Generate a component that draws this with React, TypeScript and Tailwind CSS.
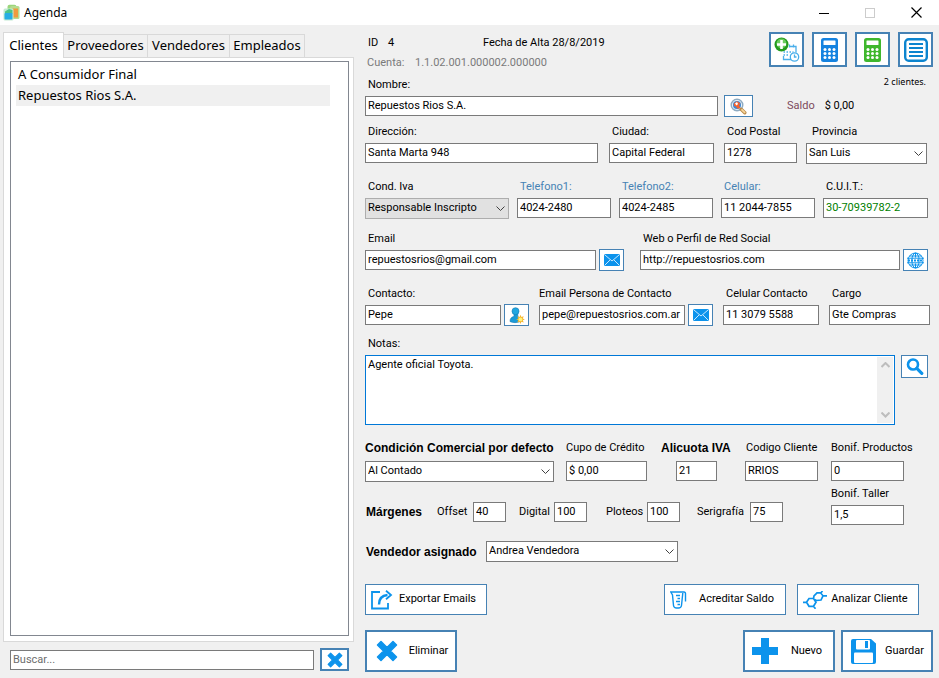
import type { ReactNode } from 'react';
import clsx from 'clsx';

const BLUE = '#0c93ec';

const tabs = [
  { label: 'Clientes', width: 'w-[61px]' },
  { label: 'Proveedores', width: 'w-[84px]' },
  { label: 'Vendedores', width: 'w-[82px]' },
  { label: 'Empleados', width: 'w-[75px]' },
];

const clients = ['A Consumidor Final', 'Repuestos Rios S.A.'];

const margins = [
  { id: 'offset', label: 'Offset', value: '40', width: 'w-[69px]' },
  { id: 'digital', label: 'Digital', value: '100', width: 'w-[68px]' },
  { id: 'ploteos', label: 'Ploteos', value: '100', width: 'w-[74px] ml-[6px]' },
  { id: 'serigrafia', label: 'Serigrafía', value: '75', width: 'w-[86px] ml-1' },
];

/* ---------- icons ---------- */

function AppIcon() {
  return (
    <svg width="17" height="17" viewBox="0 0 17 17">
      <rect x="4.5" y=".8" width="9" height="12" rx="2" fill="#9bd67c" />
      <rect x="7" y="2" width="9.500" height="13" rx="1.500" fill="#b5dc8f" />
      <rect x="9.500" y="4.500" width="5.500" height="9" fill="#f09a3e" />
      <rect x=".5" y="4.500" width="10" height="12" rx="1.500" fill="#c4ead2" />
      <path d="M2 7.500L6 5l3.500 1v4H2z" fill="#4cc487" />
      <rect x="1.500" y="9" width="8" height="6.500" rx="1" fill="#27aee4" />
    </svg>
  );
}

function MailIcon() {
  return (
    <svg width="16" height="12" viewBox="0 0 16 12" fill="none">
      <rect width="16" height="12" rx="1.500" fill={BLUE} />
      <path d="M1 1l7 6 7-6M1 11l5-5M15 11l-5-5" stroke="#c8e8ff" strokeWidth="1" />
    </svg>
  );
}

function GlobeIcon() {
  return (
    <svg width="17" height="17" viewBox="0 0 17 17" fill="none" stroke={BLUE}>
      <circle cx="8.5" cy="8.5" r="7.5" />
      <ellipse cx="8.5" cy="8.5" rx="3.6" ry="7.5" />
      <path d="M8.5 1v4.500M8.500 11.500V16M2.5 4h12M2.5 13h12" />
      <path d="M0 6.200h17M0 10.800h17" />
      <path d="M1 8.500h15" strokeWidth="2" strokeDasharray="2 1" />
    </svg>
  );
}

function SearchIcon() {
  return (
    <svg width="18" height="17" viewBox="0 0 18 17" fill="none" stroke={BLUE}>
      <circle cx="7" cy="6.5" r="5" strokeWidth="2.6" />
      <path d="M10.8 10.3l5 5" strokeWidth="3.2" strokeLinecap="round" />
    </svg>
  );
}

function LookupIcon() {
  return (
    <svg width="17" height="17" viewBox="0 0 17 17" fill="none">
      <circle cx="7" cy="7" r="5.8" fill="#e6f2fb" stroke="#8eabc2" strokeWidth="1.4" />
      <circle cx="7" cy="7" r="4" fill="#3e86d2" />
      <path d="M3.800 5.500L7 3.300l3.400 2-1.400 2.200L10.500 10l-3 .8L6 8.500 4 8z" fill="#f4622e" />
      <path d="M5 5.500l2-1.500 1 2-1.500 1.500z" fill="#ffffff" />
      <path d="M11.2 11.2l3.6 3.6" stroke="#b98a4a" strokeWidth="3.400" strokeLinecap="round" />
      <path d="M12 11.800l2.600 2.600" stroke="#f7d59b" strokeWidth="1.800" strokeLinecap="round" />
    </svg>
  );
}

function PersonIcon() {
  return (
    <svg width="17" height="17" viewBox="0 0 17 17">
      <path
        d="M2 14.500c0-3 1.500-4.500 3.800-5L6.500 6h3l.5 4c1.500.5 2.500 2.500 2 4.500-2.500 1.500-7.500 1.500-10 0z"
        fill="#1b9bd8"
        stroke="#0f78b4"
        strokeWidth=".6"
      />
      <circle cx="7.500" cy="4.200" r="3.500" fill="#22a7e0" stroke="#0f78b4" strokeWidth=".6" />
      <path
        d="M12.500 7.800l.9 2.300 2.300-.9-.9 2.300 2 .9-2 .9.9 2.300-2.300-.9-.9 2.200-.9-2.200-2.300.9.9-2.300-2-.9 2-.9-.9-2.300 2.300.9z"
        fill="#f6b530"
      />
      <circle cx="12.500" cy="12.400" r="1.900" fill="#fff27a" />
    </svg>
  );
}

function ScheduleIcon() {
  return (
    <svg width="26" height="26" viewBox="0 0 26 26" fill="none">
      <g stroke="#4aaeea" strokeWidth="1.300">
        <path d="M9.500 19v3.500h8M15 9.500h7v6M15.500 7.500v3M19.500 7.500v3" />
        <path d="M9.500 15h10M9.500 18h6" strokeDasharray="1.500 1.500" strokeWidth="1.600" />
        <circle cx="20.500" cy="20" r="4.200" fill="#ffffff" />
        <path d="M20.500 17.500V20h2" />
      </g>
      <circle cx="7.500" cy="7.500" r="7" fill="#239a1c" />
      <circle cx="7.500" cy="6.500" r="5" fill="#6acb5c" />
      <path d="M7.500 3v9M3 7.500h9" stroke="#ffffff" strokeWidth="2.600" />
    </svg>
  );
}

function CalculatorIcon({ color }: { color: string }) {
  return (
    <svg width="17" height="24" viewBox="0 0 17 24">
      <rect width="17" height="24" rx="2.500" fill={color} />
      <rect x="2.500" y="2.500" width="12" height="4.500" rx=".5" fill="#ffffff" />
      {[11.5, 15.5, 19.5].map((y) =>
        [4, 8.5, 13].map((x) => <circle key={`${x}-${y}`} cx={x} cy={y} r="1.500" fill="#ffffff" />),
      )}
    </svg>
  );
}

function ListIcon() {
  return (
    <svg width="24" height="24" viewBox="0 0 24 24" fill="none" stroke="#0c85cf">
      <rect x="1.200" y="1.200" width="21.600" height="21.600" rx="3.500" strokeWidth="2.400" />
      <path d="M5 6h14M5 10h14M5 14h14M5 18h14" strokeWidth="2" />
    </svg>
  );
}

function CrossIcon({ size }: { size: number }) {
  return (
    <svg width={size} height={size} viewBox="0 0 22 22" fill={BLUE} stroke={BLUE} strokeLinejoin="round">
      <path d="M5 1.500L11 7.500l6-6L20.500 5l-6 6 6 6-3.500 3.500-6-6-6 6L1.500 17l6-6-6-6z" strokeWidth="1.500" />
    </svg>
  );
}

function PlusIcon() {
  return (
    <svg width="26" height="26" viewBox="0 0 26 26" fill={BLUE}>
      <path d="M9 0h8v9h9v8h-9v9H9v-9H0V9h9z" />
    </svg>
  );
}

function SaveIcon() {
  return (
    <svg width="25" height="25" viewBox="0 0 25 25">
      <path d="M2 0h18l5 4.500V23a2 2 0 0 1-2 2H2a2 2 0 0 1-2-2V2a2 2 0 0 1 2-2z" fill={BLUE} />
      <rect x="5" y="1" width="14" height="9.500" rx="1" fill="#ffffff" />
      <rect x="14" y="2" width="3" height="7" fill={BLUE} />
      <rect x="3" y="13.500" width="19" height="10.500" rx="1" fill="#ffffff" />
    </svg>
  );
}

function ExportIcon() {
  return (
    <svg width="22" height="20" viewBox="0 0 22 20" fill="none" stroke={BLUE} strokeWidth="1.800">
      <path d="M9 2H1v16.500h16V13" />
      <path d="M8 14.500C8 8.500 11 5.500 16.500 5" strokeWidth="2.400" />
      <path d="M15 .8l5 4.200-5 4.200" />
    </svg>
  );
}

function BeakerIcon() {
  return (
    <svg width="17" height="18" viewBox="0 0 17 18" fill="none" stroke={BLUE} strokeWidth="1.400">
      <path d="M15.500 10.500V2.500c0-1-.5-1.500-1.500-1.500H.8l1.700 3L3.500 14.500c.2 1.500 1 2.500 3 2.500h2c2 0 2.800-1 3-2.500L12.800 2" />
      <path d="M6 4.500h4M7.500 7.500H10M6 10.500h4M7.500 13.500H10" />
    </svg>
  );
}

function MoleculeIcon() {
  return (
    <svg width="24" height="18" viewBox="0 0 24 18" fill="none" stroke={BLUE} strokeWidth="1.700">
      <path d="M3.500 11.300L6 7.500h4.500l2.500 3.800-2.500 4H6zM10.500 7.500L11 4.800l3-3h3.500l2.500 3-2 4.200-4.500.5-2-1M0 11.300h3.500M10.500 15.300l2 2.500M20 4.800h4M18 1.800L19.500 0" />
    </svg>
  );
}

function Chevron({ up = false, bold = false, className }: { up?: boolean; bold?: boolean; className?: string }) {
  return (
    <svg
      width="9"
      height="6"
      viewBox="0 0 9 6"
      fill="none"
      stroke="currentColor"
      strokeWidth={bold ? 2 : 1}
      className={className}
    >
      <path d={up ? 'M.5 5l4-4 4 4' : 'M.5 .5l4 4 4-4'} />
    </svg>
  );
}

/* ---------- controls ---------- */

type FieldProps = {
  id: string;
  label: string;
  className?: string;
  labelClass?: string;
  tall?: boolean;
  children: ReactNode;
};

function Field({ id, label, className, labelClass = 'pl-[3px]', tall, children }: FieldProps) {
  return (
    <div className={clsx('flex min-w-0 flex-col', tall ? 'gap-[5px]' : 'gap-[3px]', className)}>
      <label htmlFor={id} className={clsx('leading-4 whitespace-nowrap', labelClass)}>
        {label}
      </label>
      <div className="flex h-5 items-center gap-[3px]">{children}</div>
    </div>
  );
}

function TextBox({ id, value, className = 'flex-1' }: { id: string; value: string; className?: string }) {
  return (
    <input
      id={id}
      type="text"
      defaultValue={value}
      className={clsx('h-5 min-w-0 border border-[#7a7a7a] bg-white px-0.5 pb-px outline-none', className)}
    />
  );
}

function Select({ id, value, muted }: { id: string; value: string; muted?: boolean }) {
  return (
    <div className="relative min-w-0 flex-1">
      <select
        id={id}
        className={clsx(
          'block h-[21px] w-full appearance-none border pr-5 pl-0.5 outline-none',
          muted ? 'border-[#adadad] bg-[#e1e1e1]' : 'border-[#7a7a7a] bg-white',
        )}
      >
        <option>{value}</option>
      </select>
      <Chevron className="pointer-events-none absolute top-2 right-1 text-[#404040]" />
    </div>
  );
}

function IconButton({ title, className, children }: { title: string; className: string; children: ReactNode }) {
  return (
    <button
      aria-label={title}
      className={clsx('flex shrink-0 items-center justify-center border-[#4682b4] bg-white', className)}
    >
      {children}
    </button>
  );
}

function ActionButton({ icon, label, big }: { icon: ReactNode; label: string; big?: boolean }) {
  return (
    <button
      className={clsx(
        'flex items-center border-[#4682b4] bg-white pl-[5px] whitespace-nowrap',
        big ? 'h-[42px] w-[92px] border-2' : 'h-[31px] w-[122px] border pr-1.5',
      )}
    >
      <span className={clsx('flex shrink-0', big ? 'w-[30px] justify-center' : 'w-6')}>{icon}</span>
      <span className="flex-1 text-center">{label}</span>
    </button>
  );
}

/* ---------- panels ---------- */

function TitleBar() {
  return (
    <header className="flex h-[25px] items-center bg-white pl-[3px] font-['Noto_Sans',sans-serif] text-xs">
      <AppIcon />
      <h1 className="ml-1 flex-1">Agenda</h1>
      <button aria-label="Minimizar" className="flex h-full w-[46px] items-center justify-center">
        <svg width="10" height="10" stroke="#000000">
          <path d="M0 5.500h10" />
        </svg>
      </button>
      <button aria-label="Maximizar" disabled className="flex h-full w-[46px] items-center justify-center">
        <svg width="10" height="10" fill="none" stroke="#cccccc">
          <rect x=".5" y=".5" width="9" height="9" />
        </svg>
      </button>
      <button aria-label="Cerrar" className="flex h-full w-[46px] items-center justify-center">
        <svg width="11" height="11" stroke="#000000" strokeWidth="1.200">
          <path d="M.5 .5l10 10M10.500 .5l-10 10" />
        </svg>
      </button>
    </header>
  );
}

function ClientList() {
  return (
    <aside className="flex w-[354px] shrink-0 flex-col py-[7px] pl-[3px] font-['Noto_Sans',sans-serif] text-[13px]">
      <div role="tablist" className="flex items-end">
        {tabs.map((tab, i) => (
          <button
            key={tab.label}
            role="tab"
            aria-selected={i === 0}
            className={clsx(
              'border-[#d9d9d9] whitespace-nowrap',
              tab.width,
              i === 0 ? 'z-10 -mb-px h-[26px] border border-b-0 bg-white' : 'h-[23px] border-t border-r',
            )}
          >
            {tab.label}
          </button>
        ))}
      </div>
      <div className="flex flex-1 flex-col border border-[#d9d9d9] bg-white pt-[3px] pr-1 pb-[5px] pl-1.5">
        <ul role="listbox" aria-label="Clientes" className="flex-1 border border-[#828790] py-0.5 pr-[18px] pl-[5px]">
          {clients.map((client, i) => (
            <li
              key={client}
              role="option"
              aria-selected={i === 1}
              className={clsx('h-[21px] pl-0.5 leading-[21px]', i === 1 && 'bg-[#f0f0f0]')}
            >
              {client}
            </li>
          ))}
        </ul>
      </div>
      <div className="mt-1.5 flex items-center gap-1.5 pr-[5px] pl-[7px] font-[Roboto,sans-serif] text-[11px]">
        <input
          type="search"
          aria-label="Buscar"
          placeholder="Buscar..."
          className="h-5 min-w-0 flex-1 border border-[#7a7a7a] bg-white px-0.5 outline-none placeholder:text-[#6d6d6d]"
        />
        <IconButton title="Limpiar" className="h-[23px] w-[29px] border-2">
          <CrossIcon size={16} />
        </IconButton>
      </div>
    </aside>
  );
}

function Toolbar() {
  return (
    <div className="w-[180px] shrink-0">
      <div className="flex justify-end gap-2">
        <IconButton title="Agendar" className="size-[35px] border-2">
          <ScheduleIcon />
        </IconButton>
        <IconButton title="Calculadora" className="size-[35px] border-2">
          <CalculatorIcon color="#1583e0" />
        </IconButton>
        <IconButton title="Presupuestos" className="size-[35px] border-2">
          <CalculatorIcon color="#3fb72d" />
        </IconButton>
        <IconButton title="Listado" className="size-[35px] border-2">
          <ListIcon />
        </IconButton>
      </div>
      <p className="mt-2 pr-[7px] text-right font-['Noto_Sans',sans-serif] text-[9px] leading-[14px]">2 clientes.</p>
      <p className="mt-[9px] flex gap-[10px] pl-[34px] leading-4">
        <span className="text-[#7d4a5c]">Saldo</span>
        <span>$ 0,00</span>
      </p>
    </div>
  );
}

function ClientForm() {
  return (
    <main className="flex min-w-0 flex-1 flex-col pt-[7px] pr-1.5 pb-1.5 pl-[11px]">
      <div className="flex">
        <div className="min-w-0 flex-1 pt-[3px]">
          <p className="flex pl-[3px] leading-4">
            <span className="w-5">ID</span>
            <span className="w-[95px]">4</span>
            <span>Fecha de Alta 28/8/2019</span>
          </p>
          <p className="mt-1 flex pl-[2px] leading-4 text-[#7a7a7a]">
            <span className="w-12">Cuenta:</span>
            <span>1.1.02.001.000002.000000</span>
          </p>
          <Field id="nombre" label="Nombre:" className="mt-1.5">
            <TextBox id="nombre" value="Repuestos Rios S.A." />
            <IconButton title="Buscar cliente" className="ml-[3px] h-[22px] w-[29px] border">
              <LookupIcon />
            </IconButton>
          </Field>
        </div>
        <Toolbar />
      </div>

      <div className="mt-2 flex pr-1.5">
        <Field id="direccion" label="Dirección:" className="flex-1">
          <TextBox id="direccion" value="Santa Marta 948" />
        </Field>
        <Field id="ciudad" label="Ciudad:" className="ml-[11px] w-[105px]">
          <TextBox id="ciudad" value="Capital Federal" />
        </Field>
        <Field id="cp" label="Cod Postal" className="ml-[10px] w-[73px]">
          <TextBox id="cp" value="1278" />
        </Field>
        <Field id="provincia" label="Provincia" className="ml-[9px] w-[121px]" labelClass="pl-[6px]">
          <Select id="provincia" value="San Luis" />
        </Field>
      </div>

      <div className="mt-4 flex gap-2 pr-[5px]">
        <Field id="iva" label="Cond. Iva" className="flex-1">
          <Select id="iva" value="Responsable Inscripto" muted />
        </Field>
        <Field id="tel1" label="Telefono1:" className="w-[94px]" labelClass="pl-[3px] text-[#4682b4]">
          <TextBox id="tel1" value="4024-2480" />
        </Field>
        <Field id="tel2" label="Telefono2:" className="w-[94px]" labelClass="pl-[3px] text-[#4682b4]">
          <TextBox id="tel2" value="4024-2485" />
        </Field>
        <Field id="cel" label="Celular:" className="w-[94px]" labelClass="pl-[3px] text-[#4682b4]">
          <TextBox id="cel" value="11 2044-7855" />
        </Field>
        <Field id="cuit" label="C.U.I.T.:" className="w-[105px]">
          <TextBox id="cuit" value="30-70939782-2" className="flex-1 text-[#008000]" />
        </Field>
      </div>

      <div className="mt-[13px] flex gap-4 pr-[5px]">
        <Field id="email" label="Email" className="w-[259px]">
          <TextBox id="email" value="repuestosrios@gmail.com" />
          <IconButton title="Enviar email" className="h-[22px] w-[25px] border">
            <MailIcon />
          </IconButton>
        </Field>
        <Field id="web" label="Web o Perfil de Red Social" className="flex-1">
          <TextBox id="web" value="http://repuestosrios.com" />
          <IconButton title="Abrir sitio" className="h-[22px] w-[25px] border">
            <GlobeIcon />
          </IconButton>
        </Field>
      </div>

      <div className="mt-4 flex gap-[10px] pr-[3px]">
        <Field id="contacto" label="Contacto:" className="flex-1">
          <TextBox id="contacto" value="Pepe" />
          <IconButton title="Nuevo contacto" className="h-[22px] w-[25px] border">
            <PersonIcon />
          </IconButton>
        </Field>
        <Field id="emailContacto" label="Email Persona de Contacto" className="w-[174px]" labelClass="pl-0">
          <TextBox id="emailContacto" value="pepe@repuestosrios.com.ar" />
          <IconButton title="Enviar email al contacto" className="h-[22px] w-[25px] border">
            <MailIcon />
          </IconButton>
        </Field>
        <Field id="celContacto" label="Celular Contacto" className="w-24">
          <TextBox id="celContacto" value="11 3079 5588" />
        </Field>
        <Field id="cargo" label="Cargo" className="w-[101px]">
          <TextBox id="cargo" value="Gte Compras" />
        </Field>
      </div>

      <label htmlFor="notas" className="mt-[11px] pl-[3px] leading-4">
        Notas:
      </label>
      <div className="mt-[3px] flex items-start gap-1.5 pr-[5px]">
        <div className="flex h-[70px] flex-1 border border-[#0078d7] bg-white p-px">
          <textarea
            id="notas"
            defaultValue="Agente oficial Toyota."
            className="flex-1 resize-none overflow-hidden px-px leading-4 outline-none"
          />
          <div className="flex w-4 flex-col items-center justify-between bg-[#f0f0f0] py-[5px] text-[#bdbdbd]">
            <Chevron up bold />
            <Chevron bold />
          </div>
        </div>
        <IconButton title="Buscar en notas" className="h-[23px] w-[27px] border">
          <SearchIcon />
        </IconButton>
      </div>

      <div className="mt-[15px] flex pr-[29px]">
        <Field
          id="condicion"
          label="Condición Comercial por defecto"
          className="flex-1"
          labelClass="font-['Liberation_Sans',sans-serif] text-xs leading-4 font-bold"
          tall
        >
          <Select id="condicion" value="Al Contado" />
        </Field>
        <Field id="cupo" label="Cupo de Crédito" className="ml-3 w-[81px]" labelClass="pl-0" tall>
          <TextBox id="cupo" value="$ 0,00" />
        </Field>
        <Field
          id="alicuota"
          label="Alicuota IVA"
          className="ml-[14px] w-[71px] [&>div]:px-[15px]"
          labelClass="font-['Liberation_Sans',sans-serif] text-xs leading-4 font-bold"
          tall
        >
          <TextBox id="alicuota" value="21" />
        </Field>
        <Field id="codigo" label="Codigo Cliente" className="ml-[13px] w-[73px]" labelClass="pl-px" tall>
          <TextBox id="codigo" value="RRIOS" />
        </Field>
        <Field id="bonifProductos" label="Bonif. Productos" className="ml-[13px] w-[73px]" labelClass="pl-0" tall>
          <TextBox id="bonifProductos" value="0" />
        </Field>
      </div>

      <div className="mt-[5px] flex items-end pr-[29px]">
        <h2 className="mb-[3px] w-[72px] pl-px font-['Liberation_Sans',sans-serif] text-xs leading-5 font-bold">
          Márgenes
        </h2>
        <div className="mb-[3px] flex flex-1 gap-[13px]">
          {margins.map((m) => (
            <div key={m.id} className={clsx('flex items-center justify-between', m.width)}>
              <label htmlFor={m.id} className="whitespace-nowrap">
                {m.label}
              </label>
              <TextBox id={m.id} value={m.value} className="w-[33px]" />
            </div>
          ))}
        </div>
        <Field id="bonifTaller" label="Bonif. Taller" className="w-[73px]" labelClass="pl-0">
          <TextBox id="bonifTaller" value="1,5" />
        </Field>
      </div>

      <div className="mt-4 flex items-center">
        <label
          htmlFor="vendedor"
          className="w-[121px] pl-px font-['Liberation_Sans',sans-serif] text-xs font-bold whitespace-nowrap"
        >
          Vendedor asignado
        </label>
        <div className="flex w-48">
          <Select id="vendedor" value="Andrea Vendedora" />
        </div>
      </div>

      <div className="mt-[22px] flex gap-[11px] pr-[14px]">
        <ActionButton icon={<ExportIcon />} label="Exportar Emails" />
        <span className="flex-1" />
        <ActionButton icon={<BeakerIcon />} label="Acreditar Saldo" />
        <ActionButton icon={<MoleculeIcon />} label="Analizar Cliente" />
      </div>

      <div className="mt-[15px] flex gap-1.5">
        <ActionButton icon={<CrossIcon size={22} />} label="Eliminar" big />
        <span className="flex-1" />
        <ActionButton icon={<PlusIcon />} label="Nuevo" big />
        <ActionButton icon={<SaveIcon />} label="Guardar" big />
      </div>
    </main>
  );
}

export default function App() {
  return (
    <div className="flex min-h-screen flex-col bg-[#f0f0f0] font-[Roboto,sans-serif] text-[11px] text-black">
      <TitleBar />
      <div className="flex flex-1">
        <ClientList />
        <ClientForm />
      </div>
    </div>
  );
}
